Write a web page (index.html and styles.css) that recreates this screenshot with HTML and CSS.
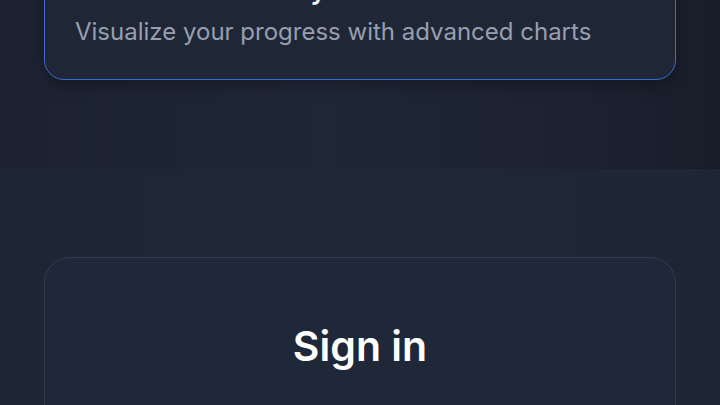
FILE: index.html
```html
<!DOCTYPE html>
<html lang="en">
<head>
<meta charset="utf-8">
<title>Sign in</title>
<link rel="stylesheet" href="styles.css">
</head>
<body>
  <section class="features">
    <div class="feature-card">
      <h3 class="feature-title">Performance Analytics</h3>
      <p class="feature-desc">Visualize your progress with advanced charts</p>
    </div>
  </section>
  <section class="auth">
    <div class="auth-card">
      <h2 class="auth-title">Sign in</h2>
    </div>
  </section>
</body>
</html>
```
FILE: styles.css
```css
* { box-sizing: border-box; }
html, body { margin: 0; padding: 0; }
body {
  width: 720px;
  height: 405px;
  overflow: hidden;
  background: #1e2636;
  font-family: Inter, "Noto Sans", sans-serif;
}
.features {
  height: 220px;
  padding: 0 44px;
  background: linear-gradient(90deg, #1c2231 0%, #1f2636 45%, #1c2231 80%, #181d2a 100%);
}
.feature-card {
  margin-top: -51px;
  padding: 24px 30px 31px;
  border: 1.5px solid #3a6bd0;
  border-radius: 20px;
  background: #1f2737;
  box-shadow: 0 6px 14px rgba(0, 0, 0, 0.25);
}
.feature-title {
  margin: 0 0 10px;
  font-size: 27px;
  line-height: 32px;
  font-weight: 600;
  color: #f1f5f9;
}
.feature-desc {
  margin: 0;
  font-size: 24px;
  line-height: 32px;
  color: #979faf;
}
.auth {
  padding: 88px 44px 0;
  height: 236px;
  overflow: hidden;
  background: linear-gradient(90deg, #1e2636 0%, #202838 50%, #1e2636 100%);
}
.auth-card {
  height: 200px;
  padding-top: 64px;
  border: 1.5px solid #323c4e;
  border-radius: 26px;
  background: #1f2838;
}
.auth-title {
  margin: 0;
  text-align: center;
  font-size: 41px;
  line-height: 48px;
  font-weight: 600;
  color: #ffffff;
}
```
